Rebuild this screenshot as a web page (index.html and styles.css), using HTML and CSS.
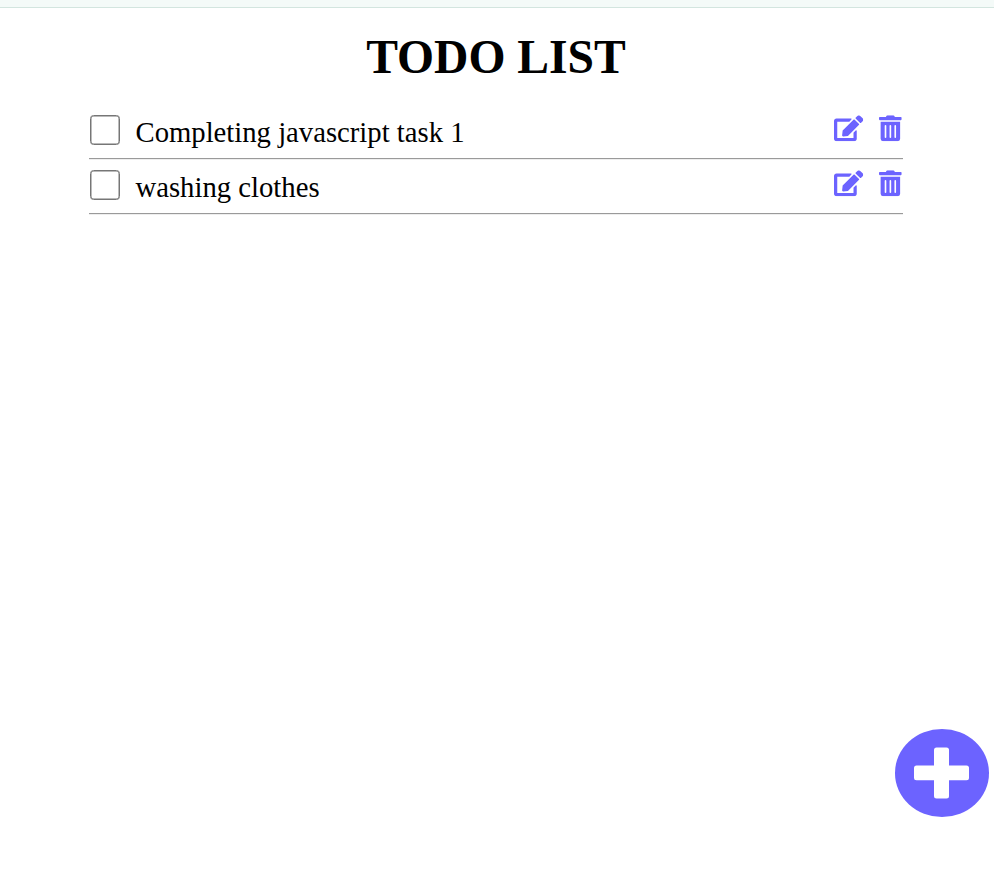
FILE: index.html
```html
<!DOCTYPE html>
<html lang="en">
<head>
<meta charset="utf-8">
<title>Todo List</title>
<link rel="stylesheet" href="styles.css">
</head>
<body>
<svg class="sprite" aria-hidden="true">
  <symbol id="edit" viewBox="0 0 576 512"><path d="M402.6 83.2l90.2 90.2c3.8 3.8 3.8 10 0 13.8L274.4 405.6l-92.8 10.3c-12.4 1.4-22.9-9.1-21.5-21.5l10.3-92.8L388.8 83.2c3.8-3.8 10-3.8 13.8 0zm162-22.9l-48.8-48.8c-15.2-15.2-39.9-15.2-55.2 0l-35.4 35.4c-3.8 3.8-3.8 10 0 13.8l90.2 90.2c3.8 3.8 10 3.8 13.8 0l35.4-35.4c15.2-15.3 15.2-40 0-55.2zM384 346.2V448H64V128h229.8c3.2 0 6.2-1.3 8.5-3.5l40-40c7.6-7.6 2.2-20.5-8.5-20.5H48C21.5 64 0 85.5 0 112v352c0 26.5 21.5 48 48 48h352c26.5 0 48-21.5 48-48V306.2c0-10.7-12.9-16-20.5-8.5l-40 40c-2.2 2.3-3.5 5.3-3.5 8.5z"/></symbol>
  <symbol id="trash" viewBox="0 0 448 512"><path d="M32 464a48 48 0 0 0 48 48h288a48 48 0 0 0 48-48V128H32zm272-256a16 16 0 0 1 32 0v224a16 16 0 0 1-32 0zm-96 0a16 16 0 0 1 32 0v224a16 16 0 0 1-32 0zm-96 0a16 16 0 0 1 32 0v224a16 16 0 0 1-32 0zM432 32H312l-9.4-18.7A24 24 0 0 0 281.1 0H166.8a23.72 23.72 0 0 0-21.4 13.3L136 32H16A16 16 0 0 0 0 48v32a16 16 0 0 0 16 16h416a16 16 0 0 0 16-16V48a16 16 0 0 0-16-16z"/></symbol>
</svg>
<div class="topbar"></div>
<main class="list">
  <h1 class="title">TODO LIST</h1>
  <div class="task">
    <input class="check" type="checkbox" id="t1">
    <label class="name" for="t1">Completing javascript task 1</label>
    <svg class="edit" viewBox="0 -6 576 512"><use href="#edit" width="576" height="512"/></svg>
    <svg class="trash" viewBox="0 -6 448 512"><use href="#trash" width="448" height="512"/></svg>
  </div>
  <div class="task">
    <input class="check" type="checkbox" id="t2">
    <label class="name" for="t2">washing clothes</label>
    <svg class="edit" viewBox="0 -6 576 512"><use href="#edit" width="576" height="512"/></svg>
    <svg class="trash" viewBox="0 -6 448 512"><use href="#trash" width="448" height="512"/></svg>
  </div>
</main>
<button class="add" aria-label="Add task">
  <svg class="plus" viewBox="0 0 55 52"><rect x="0" y="18.5" width="55" height="14.7" rx="2.5"/><rect x="20" y="0.4" width="15" height="51" rx="2.5"/></svg>
</button>
</body>
</html>
```
FILE: styles.css
```css
* { box-sizing: border-box; }
body {
  margin: 0;
  min-height: 879px;
  background: #fff;
  color: #000;
  font-family: "Liberation Serif", "Times New Roman", serif;
}
.sprite { display: none; }
.topbar {
  height: 8px;
  background: #f4faf8;
  border-bottom: 1px solid #d3e5df;
}
.list {
  width: 814px;
  margin-left: 89px;
}
.title {
  margin: 0 0 20px;
  padding-top: 22px;
  font-size: 47.6px;
  line-height: 55px;
  text-align: center;
}
.task {
  display: flex;
  align-items: flex-start;
  height: 55px;
  padding: 10px 1px 0;
  border-bottom: 1px solid #eee;
  box-shadow: inset 0 -1px #9a9a9a;
}
.check {
  appearance: none;
  width: 30px;
  height: 30px;
  margin: 0 15.5px 0 0;
  background: #fff;
  border: 1px solid #767676;
  border-radius: 3.5px;
  box-shadow: inset 0 0 0 0.5px #767676;
}
.name {
  flex: 1;
  font-size: 28.7px;
  line-height: 34px;
}
.edit, .trash {
  height: 26px;
  overflow: visible;
  fill: #6c63ff;
}
.edit { width: 29.25px; margin-right: 16px; }
.trash { width: 22.75px; }
.add {
  position: fixed;
  left: 894.5px;
  top: 729px;
  display: flex;
  align-items: center;
  justify-content: center;
  width: 94.5px;
  height: 88px;
  padding: 0;
  border: 0;
  border-radius: 50%;
  background: #6c63ff;
}
.plus { width: 55px; height: 52px; fill: #fff; }
```
